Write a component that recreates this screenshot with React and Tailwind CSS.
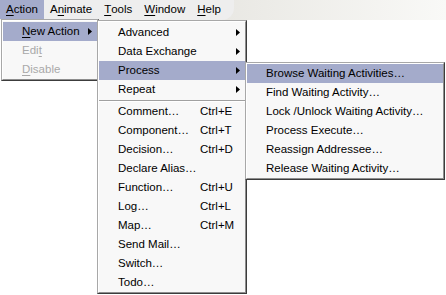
import React from "react";

const Arrow = () => (
  <svg width="4" height="7" viewBox="0 0 4 7" className="block">
    <path d="M0 0L4 3.5L0 7z" fill="#000" />
  </svg>
);

const U = ({ children }) => <span className="underline underline-offset-[2px]">{children}</span>;

function Bevel({ className, children }) {
  return (
    <div
      className={
        "absolute border border-t-[#a8a8a8] border-l-[#a8a8a8] border-r-[#3c3c3c] border-b-[#3c3c3c] bg-[#f8f8f8] " +
        className
      }
    >
      <div className="h-full border border-t-white border-l-white border-r-[#8e8e8e] border-b-[#8e8e8e]">
        {children}
      </div>
    </div>
  );
}

function Item({ label, shortcut, sub, active, disabled, labelW = "w-[82px]" }) {
  return (
    <div
      className={
        "flex h-[19px] items-center pl-[19px] pr-[5px] whitespace-nowrap " +
        (active ? "bg-[#a4abcb] " : "") +
        (disabled ? "text-[#a9a9a9]" : "text-black")
      }
    >
      <span className={shortcut ? labelW : ""}>{label}</span>
      {shortcut && <span>{shortcut}</span>}
      {sub && (
        <span className="ml-auto">
          <Arrow />
        </span>
      )}
    </div>
  );
}

export default function App() {
  const menu2 = [
    ["Advanced", null, true],
    ["Data Exchange", null, true],
    ["Process", null, true, true],
    ["Repeat", null, true],
  ];
  const menu2b = [
    ["Comment\u2026", "Ctrl+E"],
    ["Component\u2026", "Ctrl+T"],
    ["Decision\u2026", "Ctrl+D"],
    ["Declare Alias\u2026"],
    ["Function\u2026", "Ctrl+U"],
    ["Log\u2026", "Ctrl+L"],
    ["Map\u2026", "Ctrl+M"],
    ["Send Mail\u2026"],
    ["Switch\u2026"],
    ["Todo\u2026"],
  ];
  const menu3 = [
    "Browse Waiting Activities\u2026",
    "Find Waiting Activity\u2026",
    "Lock /Unlock Waiting Activity\u2026",
    "Process Execute\u2026",
    "Reassign Addressee\u2026",
    "Release Waiting Activity\u2026",
  ];
  return (
    <div
      className="relative h-[295px] w-[446px] overflow-hidden bg-white text-[11.5px] leading-none text-black"
      style={{ fontFamily: '"Liberation Sans", Arial, sans-serif' }}
    >
      <div className="flex h-[20px] bg-gradient-to-r from-[#d9d7d0] to-[#f9f9f7]">
        <div className="flex h-[20px] w-[234px] items-stretch rounded-br-[12px] bg-[#eeeeee] pb-[1px]">
          <div className="flex items-center bg-[#a4abcb] px-[6px]">
            <U>A</U>ction
          </div>
          <div className="flex items-center px-[6px]">
            A<U>n</U>imate
          </div>
          <div className="flex items-center px-[6px]">
            <U>T</U>ools
          </div>
          <div className="flex items-center px-[6px]">
            <U>W</U>indow
          </div>
          <div className="flex items-center px-[6px]">
            <U>H</U>elp
          </div>
        </div>
      </div>

      <Bevel className="left-[1px] top-[19px] z-10 h-[62px] w-[98px]">
        <div className="pt-[1px]">
          <Item label={<><U>N</U>ew Action</>} sub active />
          <Item label={<>Edi<U>t</U></>} disabled />
          <Item label={<><U>D</U>isable</>} disabled />
        </div>
      </Bevel>

      <Bevel className="left-[97px] top-[20px] z-20 h-[274px] w-[150px]">
        <div className="pt-[1px]">
          {menu2.map(([l, s, sub, act]) => (
            <Item key={l} label={l} shortcut={s} sub={sub} active={act} />
          ))}
          <div className="flex h-[3px] flex-col justify-center">
            <div className="h-[1px] bg-[#a0a0a0]" />
            <div className="h-[1px] bg-white" />
          </div>
          {menu2b.map(([l, s]) => (
            <Item key={l} label={l} shortcut={s} />
          ))}
        </div>
      </Bevel>

      <Bevel className="left-[245px] top-[62px] z-30 h-[118px] w-[200px]">
        <div>
          {menu3.map((l, i) => (
            <Item key={l} label={l} active={i === 0} />
          ))}
        </div>
      </Bevel>
    </div>
  );
}
